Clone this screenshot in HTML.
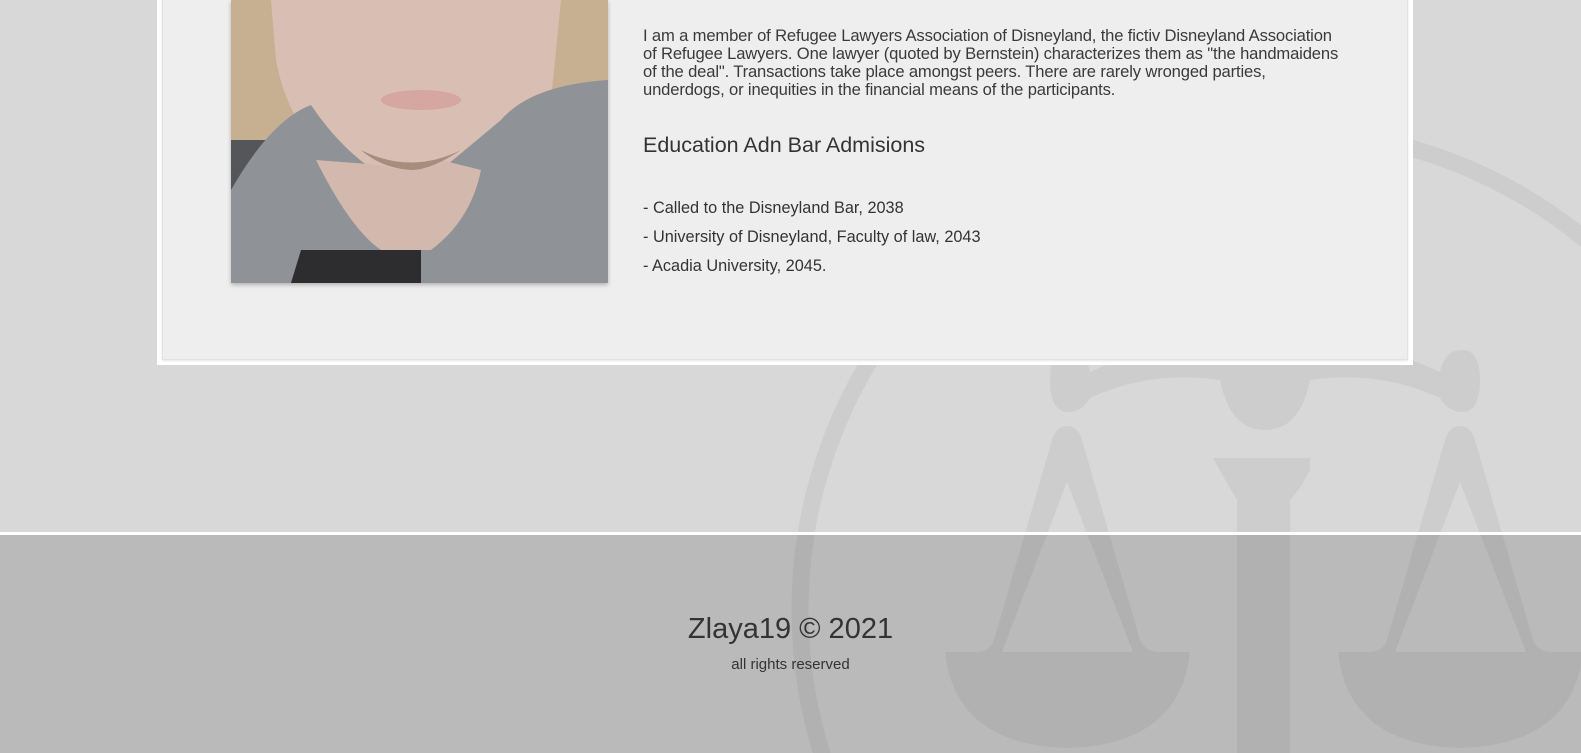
<!DOCTYPE html>
<html><head><meta charset="utf-8"><style>
html,body{margin:0;padding:0;width:1581px;height:753px;overflow:hidden;background:#d8d8d8;font-family:"Liberation Sans",sans-serif;color:#3a3a3a;position:relative}
.footer{position:absolute;left:0;top:535px;width:1581px;height:218px;background:#bababa}
.line{position:absolute;left:0;top:532px;width:1581px;height:3px;background:#fff;z-index:2}
.wm{position:absolute;left:0;top:0;z-index:1}
.card{position:absolute;left:157px;top:-10px;width:1256px;height:375px;background:#fff;z-index:3}
.inner{position:absolute;left:5px;top:0;width:1244px;height:368px;background:#eeeeee;border:1px solid #e2e2e2;box-shadow:0 1px 2px rgba(0,0,0,.1)}
.photo{position:absolute;left:231px;top:0;width:377px;height:283px;z-index:4;box-shadow:0 2px 4px rgba(0,0,0,.25)}
.txt{position:absolute;left:643px;z-index:4;white-space:nowrap}
p.txt{top:27px;margin:0;font-size:16.6px;line-height:18px;color:#3a3a3a;letter-spacing:-0.15px}
h2.txt{top:133px;margin:0;font-weight:normal;font-size:21.5px;color:#333}
.li{font-size:16.3px;color:#333}
.ft{position:absolute;z-index:4;width:1581px;left:0;text-align:center;color:#333}
</style></head><body>
<div class="footer"></div>
<svg class="wm" width="1581" height="753" viewBox="0 0 1581 753">
<g fill="rgba(0,0,0,0.047)" stroke="none">
<circle cx="1280" cy="610" r="480" fill="none" stroke="rgba(0,0,0,0.047)" stroke-width="17"/>
<path d="M1050 380 Q1050 350 1068 350 Q1086 350 1090 372 Q1180 330 1225 352 Q1240 360 1265 360 Q1290 360 1305 352 Q1350 330 1440 372 Q1444 350 1462 350 Q1480 350 1480 380 Q1480 412 1462 412 Q1448 412 1440 398 Q1380 370 1310 380 Q1300 430 1265 430 Q1230 430 1220 380 Q1150 370 1090 398 Q1082 412 1068 412 Q1050 412 1050 380Z"/>
<path d="M1213 458 L1310 458 L1310 470 Q1300 490 1290 500 L1290 753 L1237 753 L1237 500 Q1225 480 1213 458Z"/>
<path d="M1067 426 Q1078 426 1082 440 L1140 640 Q1145 652 1160 652 L1190 652 Q1180 745 1067 748 Q955 745 945 652 L975 652 Q990 652 994 640 L1052 440 Q1056 426 1067 426Z M1067 482 L1002 652 L1133 652Z" fill-rule="evenodd"/>
<path d="M1460 426 Q1471 426 1475 440 L1533 640 Q1538 652 1553 652 L1583 652 Q1573 745 1460 748 Q1348 745 1338 652 L1368 652 Q1383 652 1387 640 L1445 440 Q1449 426 1460 426Z M1460 482 L1395 652 L1526 652Z" fill-rule="evenodd"/>
</g></svg>
<div class="line"></div>
<div class="card"><div class="inner"></div></div>
<svg class="photo" width="377" height="283" viewBox="0 0 377 283">
<rect width="377" height="283" fill="#c7b092"/>
<rect x="0" y="140" width="50" height="143" fill="#55565a"/>
<path d="M40 0 L330 0 L320 100 Q300 150 260 170 L120 170 Q60 140 45 60Z" fill="#d9bfb3"/>
<path d="M0 190 Q40 120 80 105 Q110 150 150 175 L210 170 L270 120 Q300 85 377 80 L377 283 L0 283Z" fill="#8f9296"/>
<path d="M85 160 Q120 230 150 250 L200 250 Q240 220 250 170 L210 160 Q180 175 150 165Z" fill="#d2b8ad"/>
<path d="M60 283 L70 250 L190 250 L190 283Z" fill="#2d2d30"/>
<ellipse cx="190" cy="100" rx="40" ry="10" fill="#d6a6a0"/>
<path d="M130 150 Q180 175 230 150 Q200 170 180 170 Q150 168 130 150Z" fill="#a58e7c"/>
</svg>
<p class="txt">I am a member of Refugee Lawyers Association of Disneyland, the fictiv Disneyland Association<br>of Refugee Lawyers. One lawyer (quoted by Bernstein) characterizes them as "the handmaidens<br>of the deal". Transactions take place amongst peers. There are rarely wronged parties,<br>underdogs, or inequities in the financial means of the participants.</p>
<h2 class="txt">Education Adn Bar Admisions</h2>
<div class="txt li" style="top:199px">- Called to the Disneyland Bar, 2038</div>
<div class="txt li" style="top:228px">- University of Disneyland, Faculty of law, 2043</div>
<div class="txt li" style="top:257px">- Acadia University, 2045.</div>
<div class="ft" style="top:613px;font-size:29px">Zlaya19 © 2021</div>
<div class="ft" style="top:656px;font-size:15px">all rights reserved</div>
</body></html>
